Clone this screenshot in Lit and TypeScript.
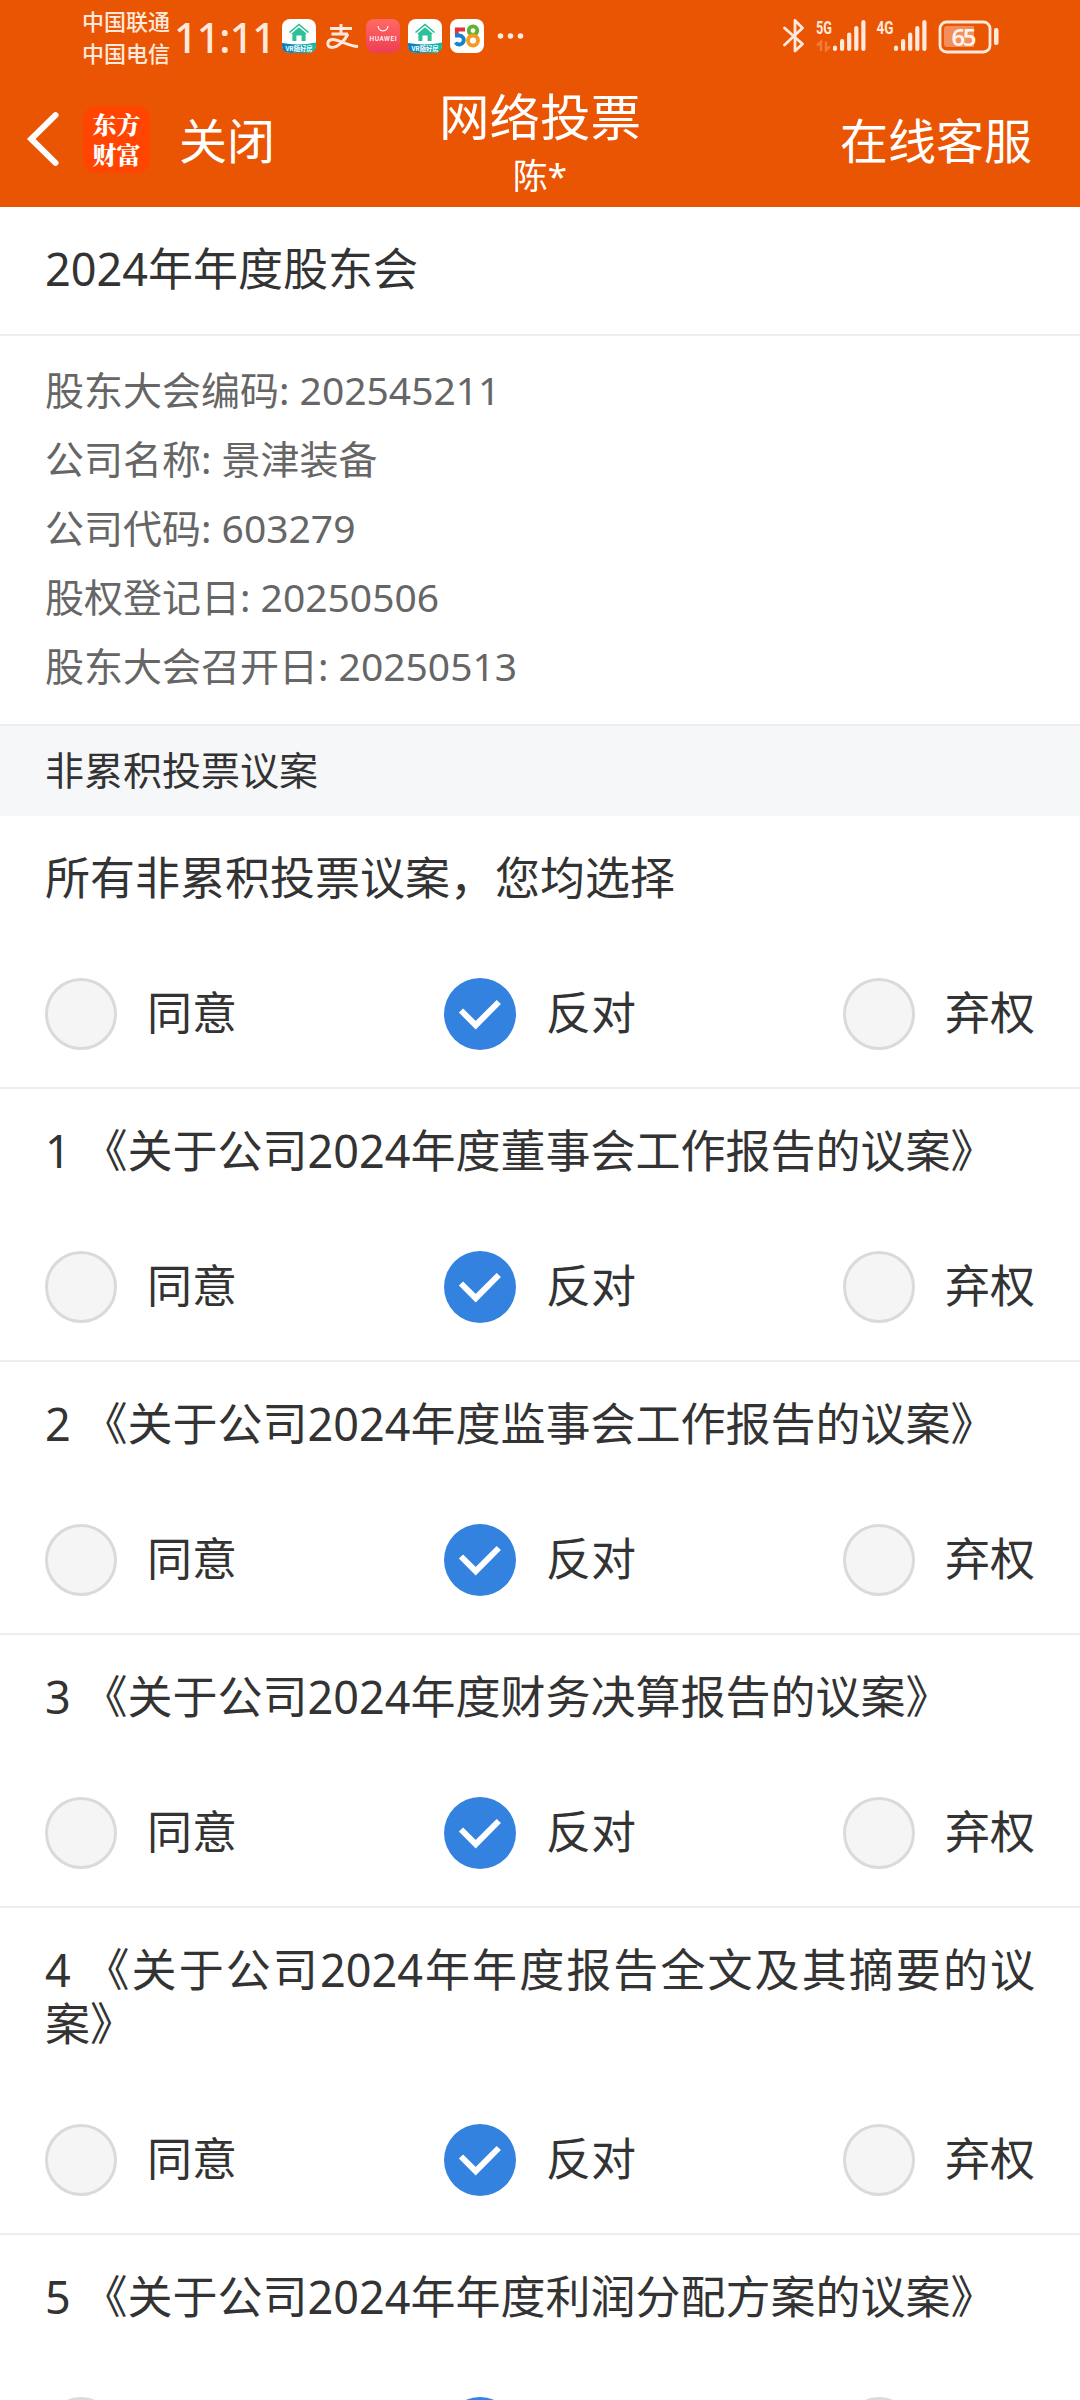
import { LitElement, html, svg, css } from "lit";
import { customElement, property, state } from "lit/decorators.js";

const OPTIONS = ["同意", "反对", "弃权"];

const INFO = [
  ["股东大会编码", "202545211"],
  ["公司名称", "景津装备"],
  ["公司代码", "603279"],
  ["股权登记日", "20250506"],
  ["股东大会召开日", "20250513"],
];

const PROPOSALS = [
  "所有非累积投票议案，您均选择",
  "1 《关于公司2024年度董事会工作报告的议案》",
  "2 《关于公司2024年度监事会工作报告的议案》",
  "3 《关于公司2024年度财务决算报告的议案》",
  "4 《关于公司2024年年度报告全文及其摘要的议案》",
  "5 《关于公司2024年年度利润分配方案的议案》",
];

@customElement("status-bar")
class StatusBar extends LitElement {
  static styles = css`
    :host { display: flex; height: 72px; color: #ffe9dc; }
    .carriers { margin: 5px 0 0 82px; width: 88px; font-size: 22px; font-weight: 500; line-height: 32px; white-space: nowrap; }
    .clock { margin: 14px 0 0 4px; width: 103px; font: 500 41px/46px "Noto Sans", sans-serif; letter-spacing: -0.8px; white-space: nowrap; }
    .icons { display: block; margin: 19px 0 0 5px; flex: none; }
    .right { display: block; margin: 17px 0 0 auto; flex: none; }
    text { font-family: "Noto Sans CJK SC", sans-serif; }
    .latin { font-family: "Roboto", sans-serif; }
    .round { font-family: "Noto Sans", sans-serif; }
  `;

  private house(x: number) {
    return svg`<g transform="translate(${x} 0)">
      <rect width="34" height="34" rx="8" fill="#fff" />
      <path d="M0 24 Q17 27 34 23.5 V26 Q34 34 26 34 H8 Q0 34 0 26Z" fill="url(#vr)" />
      <path d="M7.5 13.5 17 5.500 26.500 13.500" fill="none" stroke="#27bd91" stroke-width="1.6" />
      <path d="M17 8.2 25 15 H23.6 V22 H19.6 V16.5 H14.4 V22 H10.4 V15 H9Z" fill="#2cc197" />
      <text x="17" y="32.2" font-size="6.3" font-weight="700" fill="#fff" text-anchor="middle">VR随好房</text>
    </g>`;
  }

  private bars(x: number) {
    return svg`<g stroke="#ffe9dc" stroke-width="4.2" stroke-linecap="round">
      ${[5.5, 12, 18.5, 25, 31].map((h, i) => svg`<path d="M${x + i * 7.1} 34 v${-(h - 4.2)}" />`)}
    </g>`;
  }

  render() {
    return html`
      <div class="carriers"><div>中国联通</div><div>中国电信</div></div>
      <div class="clock">11:11</div>
      <svg class="icons" width="250" height="36" viewBox="0 0 250 36">
        <defs>
          <linearGradient id="vr"><stop stop-color="#0b78c2" /><stop offset="1" stop-color="#10bfa2" /></linearGradient>
          <linearGradient id="hw" x2="0" y2="1"><stop stop-color="#ff6a63" /><stop offset="1" stop-color="#ee3d55" /></linearGradient>
        </defs>
        ${this.house(0)}
        <path d="M48 9.5 H70 M59 5 V15 M49.500 15 H66 M66 15 C63 21 56 28.500 50 28.500 C44 28.500 44.500 20.500 51 20.500 C57 20.500 66 27 76 27.500" fill="none" stroke="#ffe9dc" stroke-width="3" />
        <rect x="84" width="34" height="34" rx="8" fill="url(#hw)" />
        <path d="M96 7 C97 13.500 105 13.500 106 7" fill="none" stroke="#fff" stroke-width="1.2" />
        <text class="latin" x="101" y="21.800" font-size="6.5" font-weight="500" fill="#fff" text-anchor="middle" textLength="27">HUAWEI</text>
        ${this.house(126)}
        <rect x="168" width="34" height="34" rx="8" fill="#fff" />
        <g fill="none" stroke-width="3.8">
          <path d="M183 10.500 H174.800 V16.500" stroke="#e2323f" />
          <path d="M173 16.500 H177 A4.500 4.500 0 1 1 173.500 23.500" stroke="#1684c7" />
          <circle cx="191" cy="11.600" r="4.300" stroke="#5cb531" />
          <circle cx="191" cy="21.500" r="5" stroke="#f39b25" />
        </g>
        <g fill="#ffe9dc"><circle cx="218.500" cy="17" r="2.800" /><circle cx="228.500" cy="17" r="2.800" /><circle cx="238.500" cy="17" r="2.800" /></g>
      </svg>
      <svg class="right" width="297" height="40" viewBox="783 17 297 40">
        <path d="M784.500 28 802.500 44 795 51 V20.500 L802.500 28 784.500 45" fill="none" stroke="#ffe9dc" stroke-width="2.8" stroke-linejoin="round" stroke-linecap="round" />
        <g fill="#ffe9dc">
          <text class="latin" x="816" y="34" font-size="18.500" font-weight="700" textLength="16" lengthAdjust="spacingAndGlyphs">5G</text>
          <text class="latin" x="876.500" y="34" font-size="18.500" font-weight="700" textLength="17" lengthAdjust="spacingAndGlyphs">4G</text>
        </g>
        <path d="M817 45.500 821 42 V51 M826 41.500 V50 L830 46.500" fill="none" stroke="#f27a3a" stroke-width="2.4" />
        <g transform="translate(0 15)">${this.bars(835)}${this.bars(896)}</g>
        <rect x="940" y="22" width="50" height="30" rx="6.500" fill="none" stroke="#ffe9dc" stroke-width="2.8" />
        <path d="M947 26 H974 V47 H947 Q944 47 944 44 V29 Q944 26 947 26Z" fill="#f28f5c" />
        <rect x="994" y="28" width="4.500" height="17" rx="2" fill="#ffe9dc" />
        <text class="round" x="964" y="46" font-size="24" font-weight="600" fill="#fff3ea" text-anchor="middle" textLength="25">65</text>
      </svg>
    `;
  }
}

@customElement("nav-bar")
class NavBar extends LitElement {
  static styles = css`
    :host { display: grid; grid-template-columns: 1fr auto 1fr; height: 135px; color: #fff; }
    .left { display: flex; align-items: center; height: 134px; }
    .back { display: block; margin-left: 25px; }
    .logo { display: flex; flex-direction: column; justify-content: center; align-items: center; width: 67px; height: 67px; margin-left: 23px; border-radius: 14px; background: #ff4500; font: 900 24px/30px "Noto Serif CJK SC", "Noto Sans CJK SC", sans-serif; }
    .logo span { display: block; }
    .action { font-size: 48px; line-height: 60px; }
    .close { margin-left: 29px; padding-top: 3px; }
    .center { text-align: center; }
    .title { margin-top: 10px; font-size: 50.5px; line-height: 70px; }
    .user { font-size: 35px; line-height: 48px; }
    .service { display: flex; align-items: center; justify-content: flex-end; height: 138px; padding-right: 48px; }
  `;

  render() {
    return html`
      <div class="left">
        <svg class="back" width="35" height="58" viewBox="0 0 35 58"><path d="M30.5 5.200 6.200 29 30.500 52.800" fill="none" stroke="#fff" stroke-width="6" stroke-linecap="round" /></svg>
        <div class="logo"><span>东方</span><span>财富</span></div>
        <span class="action close">关闭</span>
      </div>
      <div class="center"><div class="title">网络投票</div><div class="user">陈*</div></div>
      <div class="service"><span class="action">在线客服</span></div>
    `;
  }
}

@customElement("vote-item")
class VoteItem extends LitElement {
  @property() heading = "";
  @state() private chosen = 1;

  static styles = css`
    :host { display: block; padding: 35px 45px 37px; border-bottom: 2px solid #eee; }
    .heading { font-size: 45px; line-height: 54px; text-align: justify; }
    .options { display: flex; justify-content: space-between; margin-top: 73px; }
    .option { display: flex; align-items: center; gap: 30px; height: 72px; font-size: 45px; line-height: 54px; }
    .label { padding-bottom: 2px; }
    .mark { display: block; }
  `;

  render() {
    return html`
      <div class="heading">${this.heading}</div>
      <div class="options">
        ${OPTIONS.map((label, i) => html`
          <div class="option" @click=${() => (this.chosen = i)}>
            <svg class="mark" width="72" height="72" viewBox="0 0 72 72">
              ${i === this.chosen
                ? svg`<circle cx="36" cy="36" r="36" fill="#3482e0" /><path d="M17 32.500 31.700 47.200 54.800 24" fill="none" stroke="#fff" stroke-width="6" />`
                : svg`<circle cx="36" cy="36" r="34.500" fill="#f5f5f5" stroke="#dadada" stroke-width="3" />`}
            </svg>
            <span class="label">${label}</span>
          </div>`)}
      </div>
    `;
  }
}

@customElement("app-root")
class AppRoot extends LitElement {
  static styles = css`
    :host { display: block; height: 2400px; overflow: hidden; background: #fff; color: #333; font-family: "Noto Sans", "Noto Sans CJK SC", sans-serif; }
    .top { background: #ea5504; }
    .meeting { height: 129px; padding: 0 45px; font-size: 45px; line-height: 124px; border-bottom: 2px solid #eee; box-sizing: border-box; }
    .info { padding: 19px 45px 24px; border-bottom: 2px solid #eee; color: #666; font-size: 39px; line-height: 69px; }
    .section { height: 90px; padding: 0 45px; background: #f6f7f9; font-size: 39px; line-height: 87px; }
  `;

  render() {
    return html`
      <header class="top"><status-bar></status-bar><nav-bar></nav-bar></header>
      <div class="meeting">2024年年度股东会</div>
      <div class="info">${INFO.map(([k, v]) => html`<div>${k}: ${v}</div>`)}</div>
      <div class="section">非累积投票议案</div>
      <main>${PROPOSALS.map((p) => html`<vote-item .heading=${p}></vote-item>`)}</main>
    `;
  }
}
